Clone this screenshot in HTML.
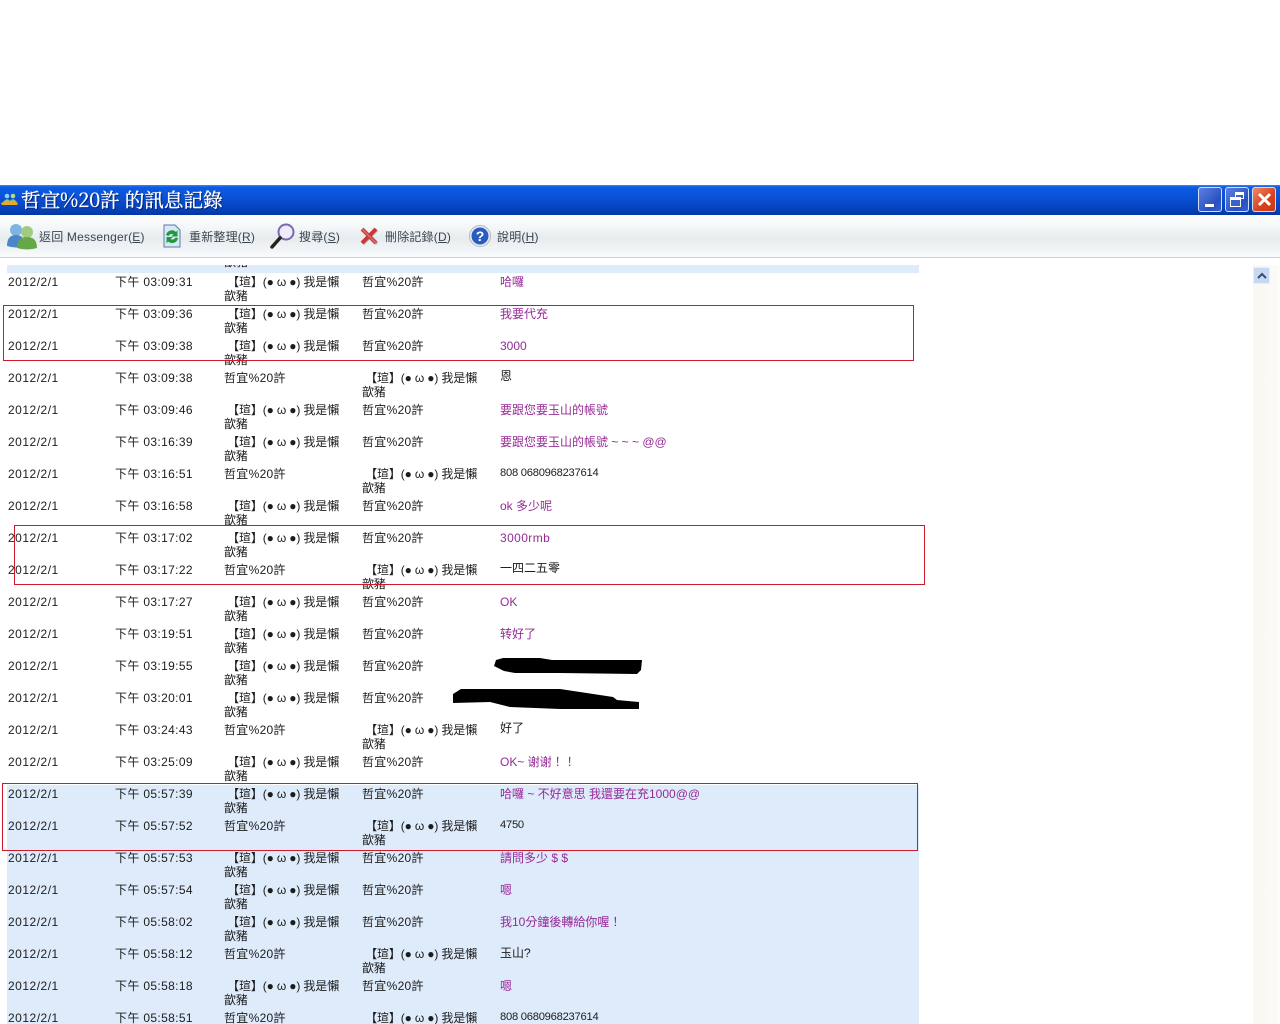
<!DOCTYPE html>
<html lang="zh-Hant"><head><meta charset="utf-8"><title>訊息記錄</title>
<style>
html,body{margin:0;padding:0;width:1280px;height:1024px;overflow:hidden;background:#fff}
body{position:relative;font:12px/14px "Liberation Sans","Noto Sans CJK TC","WenQuanYi Zen Hei",sans-serif;color:#1c1c1c}
.tb{position:absolute;left:0;top:185px;width:1280px;height:30px;background:linear-gradient(#3a8af0 0,#0c5ce4 2px,#0a50d4 45%,#0540b8 85%,#0436a4 100%)}
.ttl{position:absolute;left:21px;top:187px;font:19.6px/24px "Noto Serif CJK SC","Liberation Serif",serif;color:#fff;-webkit-text-stroke:.35px #fff;text-shadow:1px 1px 1px #04185a;white-space:pre}
.bar{position:absolute;left:0;top:215px;width:1280px;height:42px;background:linear-gradient(#fdfefe 0,#f4f7f9 30%,#e6ebee 55%,#f3f6f8 85%,#fafbfc 100%);border-bottom:1px solid #ccd1d5}
.t{position:absolute;top:230px;color:#3c4650;white-space:pre;letter-spacing:.2px}
.t u{text-underline-offset:1px}
.b{position:absolute;left:7px;width:912px;background:#deebfb}
.c{position:absolute;white-space:pre;letter-spacing:-.15px}
.d{left:8px;letter-spacing:.5px}.h{left:115px;letter-spacing:.35px}.x{left:224px}.y{left:362px}.m{left:500px;letter-spacing:0}
.s{letter-spacing:.3px}
.p{color:#962a96}
.n{font-size:11.2px;letter-spacing:-.25px}
.box{position:absolute;border:1px solid #cc1a2a;box-sizing:border-box}
.w{position:absolute;top:187px;width:24px;height:25px;border:1px solid #cfe0f8;border-radius:3px;box-sizing:border-box;background:linear-gradient(135deg,#5c80e0,#2a50c0 70%,#3860d0)}
svg{position:absolute;overflow:visible}
#rows{position:absolute;left:0;top:1px;width:1280px;height:1023px}
</style></head><body>
<div class="tb"></div>
<svg style="left:1px;top:191px" width="18" height="16" viewBox="0 0 18 16"><circle cx="6" cy="5" r="2.3" fill="#8fd0f0"/><circle cx="12" cy="5" r="2.3" fill="#b0dc80"/><path d="M2 11q4-5 7-1 3-4 7 1z" fill="#8fc070"/><path d="M0 12q9-4 17 0l-1 2H1z" fill="#eaa82c"/></svg>
<div class="ttl">哲宜%20許 的訊息記錄</div>
<div class="w" style="left:1198px"><div style="position:absolute;left:6px;top:16px;width:9px;height:3px;background:#fff"></div></div>
<div class="w" style="left:1225px"><div style="position:absolute;left:9px;top:4px;width:9px;height:7px;border:1.5px solid #fff;border-top-width:3px;box-sizing:border-box"></div><div style="position:absolute;left:4px;top:9px;width:11px;height:10px;border:1.5px solid #fff;border-top-width:3px;box-sizing:border-box;background:#3a60d0"></div></div>
<div class="w" style="left:1252px;background:linear-gradient(135deg,#ee8a68,#d8401c 60%,#c83a18)"><svg style="left:4px;top:4px" width="15" height="15" viewBox="0 0 15 15"><path d="M2 2l11 11M13 2L2 13" stroke="#fff" stroke-width="3"/></svg></div>
<div class="bar"></div>
<svg style="left:6px;top:222px" width="32" height="28" viewBox="0 0 32 28"><circle cx="10" cy="8" r="6" fill="#7db4e0"/><path d="M1 24q0-11 9-11t9 11q-9 3-18 0z" fill="#4a86c8"/><circle cx="21" cy="10" r="6" fill="#a0cc80"/><path d="M11 26q0-11 10-11t10 11q-10 3-20 0z" fill="#66a848"/></svg>
<div class="t" style="left:39px">返回 Messenger(<u>E</u>)</div>
<svg style="left:163px;top:224px" width="18" height="24" viewBox="0 0 18 24"><path d="M1 1h11l5 5v17H1z" fill="#d8e8f6" stroke="#5a7ca8"/><path d="M3 11a6 6 0 0 1 10-3l1.500-2v6.500H8l2.500-2a3.500 3.500 0 0 0-5 1.500z" fill="#1f9a38"/><path d="M15 14a6 6 0 0 1-10 3.500l-1.500 2V13H10l-2.500 2a3.500 3.500 0 0 0 5-1.500z" fill="#1f9a38"/></svg>
<div class="t" style="left:189px">重新整理(<u>R</u>)</div>
<svg style="left:270px;top:222px" width="26" height="28" viewBox="0 0 26 28"><circle cx="16" cy="10" r="7.500" fill="#f0eafa" stroke="#7a6aa8" stroke-width="2"/><path d="M10 16L2 25" stroke="#222" stroke-width="3.500" stroke-linecap="round"/></svg>
<div class="t" style="left:299px">搜尋(<u>S</u>)</div>
<svg style="left:360px;top:227px" width="18" height="18" viewBox="0 0 18 18"><path d="M3 3l14 14M17 3L3 17" stroke="#8a8f96" stroke-width="3" opacity=".6"/><path d="M2 2l14 14M16 2L2 16" stroke="#c83838" stroke-width="4"/><path d="M2 2l14 14" stroke="#e07070" stroke-width="1.500"/></svg>
<div class="t" style="left:385px">刪除記錄(<u>D</u>)</div>
<svg style="left:469px;top:225px" width="22" height="22" viewBox="0 0 22 22"><circle cx="11" cy="11" r="10.500" fill="#e8ecf0" stroke="#b0b8c0"/><circle cx="11" cy="11" r="8.500" fill="#2a5cc0"/><text x="11" y="16" text-anchor="middle" font-size="14" font-weight="bold" fill="#fff" font-family="Liberation Sans">?</text></svg>
<div class="t" style="left:497px">說明(<u>H</u>)</div>

<div class="b" style="top:265px;height:8px"></div>
<div class="b" style="top:785px;height:239px"></div>
<div style="position:absolute;left:1253px;top:258px;width:26px;height:766px;background:linear-gradient(90deg,#f9f8f1,#fcfbf8)"></div>
<div style="position:absolute;left:1253px;top:267px;width:17px;height:17px;background:#c8d8f4;border:1px solid #e8eef8;box-sizing:border-box"><svg style="left:3px;top:4px" width="10" height="7" viewBox="0 0 10 7"><path d="M1 6l4-4 4 4" fill="none" stroke="#3a4a70" stroke-width="2"/></svg></div>
<div style="position:absolute;left:224px;top:258px;height:15px;width:60px;overflow:hidden"><div style="position:absolute;top:-3px">歆豬</div></div>
<div style="position:absolute;left:0;top:258px;width:1280px;height:7px;background:#fff"></div>

<div id="rows">
<div class="c d" style="top:274px">2012/2/1</div><div class="c h" style="top:274px">下午 03:09:31</div><div class="c x" style="top:274px"> 【瑄】(● ω ●) 我是懶
歆豬</div><div class="c y s" style="top:274px">哲宜%20許</div><div class="c m p" style="top:274px">哈囉</div>
<div class="c d" style="top:306px">2012/2/1</div><div class="c h" style="top:306px">下午 03:09:36</div><div class="c x" style="top:306px"> 【瑄】(● ω ●) 我是懶
歆豬</div><div class="c y s" style="top:306px">哲宜%20許</div><div class="c m p" style="top:306px">我要代充</div>
<div class="c d" style="top:338px">2012/2/1</div><div class="c h" style="top:338px">下午 03:09:38</div><div class="c x" style="top:338px"> 【瑄】(● ω ●) 我是懶
歆豬</div><div class="c y s" style="top:338px">哲宜%20許</div><div class="c m p" style="top:338px">3000</div>
<div class="c d" style="top:370px">2012/2/1</div><div class="c h" style="top:370px">下午 03:09:38</div><div class="c x s" style="top:370px">哲宜%20許</div><div class="c y" style="top:370px"> 【瑄】(● ω ●) 我是懶
歆豬</div><div class="c m" style="top:368px">恩</div>
<div class="c d" style="top:402px">2012/2/1</div><div class="c h" style="top:402px">下午 03:09:46</div><div class="c x" style="top:402px"> 【瑄】(● ω ●) 我是懶
歆豬</div><div class="c y s" style="top:402px">哲宜%20許</div><div class="c m p" style="top:402px">要跟您要玉山的帳號</div>
<div class="c d" style="top:434px">2012/2/1</div><div class="c h" style="top:434px">下午 03:16:39</div><div class="c x" style="top:434px"> 【瑄】(● ω ●) 我是懶
歆豬</div><div class="c y s" style="top:434px">哲宜%20許</div><div class="c m p" style="top:434px">要跟您要玉山的帳號 ~ ~ ~ @@</div>
<div class="c d" style="top:466px">2012/2/1</div><div class="c h" style="top:466px">下午 03:16:51</div><div class="c x s" style="top:466px">哲宜%20許</div><div class="c y" style="top:466px"> 【瑄】(● ω ●) 我是懶
歆豬</div><div class="c m n" style="top:465px">808 0680968237614</div>
<div class="c d" style="top:498px">2012/2/1</div><div class="c h" style="top:498px">下午 03:16:58</div><div class="c x" style="top:498px"> 【瑄】(● ω ●) 我是懶
歆豬</div><div class="c y s" style="top:498px">哲宜%20許</div><div class="c m p" style="top:498px">ok 多少呢</div>
<div class="c d" style="top:530px">2012/2/1</div><div class="c h" style="top:530px">下午 03:17:02</div><div class="c x" style="top:530px"> 【瑄】(● ω ●) 我是懶
歆豬</div><div class="c y s" style="top:530px">哲宜%20許</div><div class="c m p" style="top:530px;letter-spacing:.4px">3000rmb</div>
<div class="c d" style="top:562px">2012/2/1</div><div class="c h" style="top:562px">下午 03:17:22</div><div class="c x s" style="top:562px">哲宜%20許</div><div class="c y" style="top:562px"> 【瑄】(● ω ●) 我是懶
歆豬</div><div class="c m" style="top:560px">一四二五零</div>
<div class="c d" style="top:594px">2012/2/1</div><div class="c h" style="top:594px">下午 03:17:27</div><div class="c x" style="top:594px"> 【瑄】(● ω ●) 我是懶
歆豬</div><div class="c y s" style="top:594px">哲宜%20許</div><div class="c m p" style="top:594px">OK</div>
<div class="c d" style="top:626px">2012/2/1</div><div class="c h" style="top:626px">下午 03:19:51</div><div class="c x" style="top:626px"> 【瑄】(● ω ●) 我是懶
歆豬</div><div class="c y s" style="top:626px">哲宜%20許</div><div class="c m p" style="top:626px">转好了</div>
<div class="c d" style="top:658px">2012/2/1</div><div class="c h" style="top:658px">下午 03:19:55</div><div class="c x" style="top:658px"> 【瑄】(● ω ●) 我是懶
歆豬</div><div class="c y s" style="top:658px">哲宜%20許</div>
<div class="c d" style="top:690px">2012/2/1</div><div class="c h" style="top:690px">下午 03:20:01</div><div class="c x" style="top:690px"> 【瑄】(● ω ●) 我是懶
歆豬</div><div class="c y s" style="top:690px">哲宜%20許</div>
<div class="c d" style="top:722px">2012/2/1</div><div class="c h" style="top:722px">下午 03:24:43</div><div class="c x s" style="top:722px">哲宜%20許</div><div class="c y" style="top:722px"> 【瑄】(● ω ●) 我是懶
歆豬</div><div class="c m" style="top:720px">好了</div>
<div class="c d" style="top:754px">2012/2/1</div><div class="c h" style="top:754px">下午 03:25:09</div><div class="c x" style="top:754px"> 【瑄】(● ω ●) 我是懶
歆豬</div><div class="c y s" style="top:754px">哲宜%20許</div><div class="c m p" style="top:754px">OK~ 谢谢&#xFF01;&#xFF01;</div>
<div class="c d" style="top:786px">2012/2/1</div><div class="c h" style="top:786px">下午 05:57:39</div><div class="c x" style="top:786px"> 【瑄】(● ω ●) 我是懶
歆豬</div><div class="c y s" style="top:786px">哲宜%20許</div><div class="c m p" style="top:786px">哈囉 ~ 不好意思 我還要在充1000@@</div>
<div class="c d" style="top:818px">2012/2/1</div><div class="c h" style="top:818px">下午 05:57:52</div><div class="c x s" style="top:818px">哲宜%20許</div><div class="c y" style="top:818px"> 【瑄】(● ω ●) 我是懶
歆豬</div><div class="c m n" style="top:817px">4750</div>
<div class="c d" style="top:850px">2012/2/1</div><div class="c h" style="top:850px">下午 05:57:53</div><div class="c x" style="top:850px"> 【瑄】(● ω ●) 我是懶
歆豬</div><div class="c y s" style="top:850px">哲宜%20許</div><div class="c m p" style="top:850px">請問多少 $ $</div>
<div class="c d" style="top:882px">2012/2/1</div><div class="c h" style="top:882px">下午 05:57:54</div><div class="c x" style="top:882px"> 【瑄】(● ω ●) 我是懶
歆豬</div><div class="c y s" style="top:882px">哲宜%20許</div><div class="c m p" style="top:882px">嗯</div>
<div class="c d" style="top:914px">2012/2/1</div><div class="c h" style="top:914px">下午 05:58:02</div><div class="c x" style="top:914px"> 【瑄】(● ω ●) 我是懶
歆豬</div><div class="c y s" style="top:914px">哲宜%20許</div><div class="c m p" style="top:914px">我10分鐘後轉給你喔&#xFF01;</div>
<div class="c d" style="top:946px">2012/2/1</div><div class="c h" style="top:946px">下午 05:58:12</div><div class="c x s" style="top:946px">哲宜%20許</div><div class="c y" style="top:946px"> 【瑄】(● ω ●) 我是懶
歆豬</div><div class="c m" style="top:945px">玉山?</div>
<div class="c d" style="top:978px">2012/2/1</div><div class="c h" style="top:978px">下午 05:58:18</div><div class="c x" style="top:978px"> 【瑄】(● ω ●) 我是懶
歆豬</div><div class="c y s" style="top:978px">哲宜%20許</div><div class="c m p" style="top:978px">嗯</div>
<div class="c d" style="top:1010px">2012/2/1</div><div class="c h" style="top:1010px">下午 05:58:51</div><div class="c x s" style="top:1010px">哲宜%20許</div><div class="c y" style="top:1010px"> 【瑄】(● ω ●) 我是懶</div><div class="c m n" style="top:1009px">808 0680968237614</div>
</div>

<svg style="left:450px;top:655px" width="195" height="56" viewBox="450 655 195 56"><path d="M496 660L503 658 540 658 552 660 642 660 641 670 637 674 560 673 515 673 504 671 494 666z" fill="#000"/><path d="M453 694L461 689 560 689 580 692 613 697 617 700 639 702 639 709 560 709 510 707 490 702 453 703z" fill="#000"/></svg>

<div class="box" style="left:3px;top:305px;width:911px;height:56px"></div>
<div class="box" style="left:14px;top:525px;width:911px;height:60px"></div>
<div class="box" style="left:2px;top:783px;width:916px;height:68px"></div>
</body></html>
